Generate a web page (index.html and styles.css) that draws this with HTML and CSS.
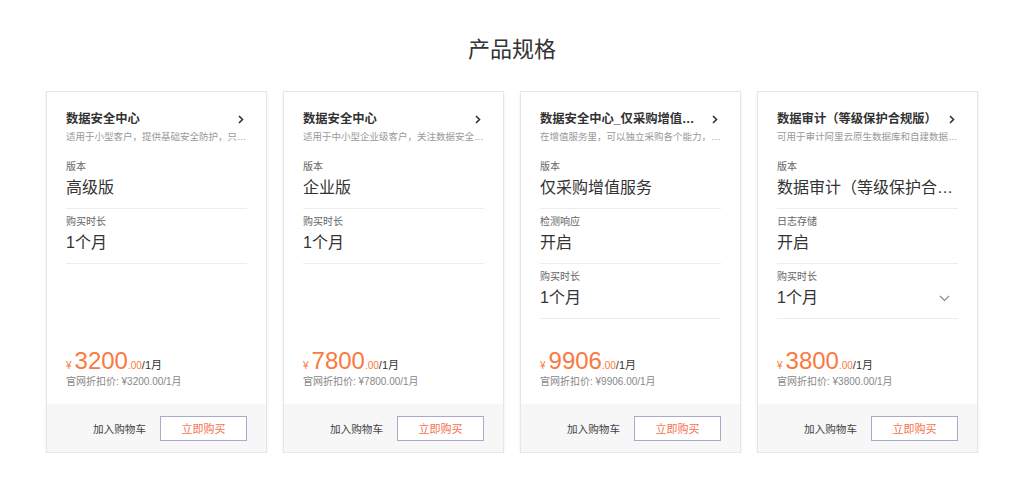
FILE: index.html
```html
<!DOCTYPE html>
<html lang="zh-CN">
<head>
<meta charset="utf-8">
<title>产品规格</title>
<link rel="stylesheet" href="styles.css">
</head>
<body>
<h1 class="page-title">产品规格</h1>
<div class="cards">

  <div class="card">
    <div class="card-body">
      <div class="card-head">
        <span class="card-title">数据安全中心</span>
        <svg class="chev-right" width="6" height="9" viewBox="0 0 6 9"><path d="M1 1l3.5 3.5L1 8" fill="none" stroke="#333" stroke-width="1.6"/></svg>
      </div>
      <div class="card-desc">适用于小型客户，提供基础安全防护，只能查看安全风险</div>
      <div class="spec first">
        <div class="spec-label">版本</div>
        <div class="spec-value">高级版</div>
      </div>
      <div class="spec">
        <div class="spec-label">购买时长</div>
        <div class="spec-value">1个月</div>
      </div>
      <div class="price-block">
        <div class="price"><span class="cur">¥</span><span class="num">3200</span><span class="dec">.00</span><span class="unit">/1月</span></div>
        <div class="discount">官网折扣价: ¥3200.00/1月</div>
      </div>
    </div>
    <div class="card-foot">
      <span class="cart">加入购物车</span>
      <button class="buy">立即购买</button>
    </div>
  </div>

  <div class="card">
    <div class="card-body">
      <div class="card-head">
        <span class="card-title">数据安全中心</span>
        <svg class="chev-right" width="6" height="9" viewBox="0 0 6 9"><path d="M1 1l3.5 3.5L1 8" fill="none" stroke="#333" stroke-width="1.6"/></svg>
      </div>
      <div class="card-desc">适用于中小型企业级客户，关注数据安全与合规的用户</div>
      <div class="spec first">
        <div class="spec-label">版本</div>
        <div class="spec-value">企业版</div>
      </div>
      <div class="spec">
        <div class="spec-label">购买时长</div>
        <div class="spec-value">1个月</div>
      </div>
      <div class="price-block">
        <div class="price"><span class="cur">¥</span><span class="num">7800</span><span class="dec">.00</span><span class="unit">/1月</span></div>
        <div class="discount">官网折扣价: ¥7800.00/1月</div>
      </div>
    </div>
    <div class="card-foot">
      <span class="cart">加入购物车</span>
      <button class="buy">立即购买</button>
    </div>
  </div>

  <div class="card">
    <div class="card-body">
      <div class="card-head">
        <span class="card-title">数据安全中心_仅采购增值服务</span>
        <svg class="chev-right" width="6" height="9" viewBox="0 0 6 9"><path d="M1 1l3.5 3.5L1 8" fill="none" stroke="#333" stroke-width="1.6"/></svg>
      </div>
      <div class="card-desc">在增值服务里，可以独立采购各个能力，按需选择</div>
      <div class="spec first">
        <div class="spec-label">版本</div>
        <div class="spec-value">仅采购增值服务</div>
      </div>
      <div class="spec">
        <div class="spec-label">检测响应</div>
        <div class="spec-value">开启</div>
      </div>
      <div class="spec">
        <div class="spec-label">购买时长</div>
        <div class="spec-value">1个月</div>
      </div>
      <div class="price-block">
        <div class="price"><span class="cur">¥</span><span class="num">9906</span><span class="dec">.00</span><span class="unit">/1月</span></div>
        <div class="discount">官网折扣价: ¥9906.00/1月</div>
      </div>
    </div>
    <div class="card-foot">
      <span class="cart">加入购物车</span>
      <button class="buy">立即购买</button>
    </div>
  </div>

  <div class="card">
    <div class="card-body">
      <div class="card-head">
        <span class="card-title">数据审计（等级保护合规版）</span>
        <svg class="chev-right" width="6" height="9" viewBox="0 0 6 9"><path d="M1 1l3.5 3.5L1 8" fill="none" stroke="#333" stroke-width="1.6"/></svg>
      </div>
      <div class="card-desc">可用于审计阿里云原生数据库和自建数据库的操作</div>
      <div class="spec first">
        <div class="spec-label">版本</div>
        <div class="spec-value">数据审计（等级保护合规版）</div>
      </div>
      <div class="spec">
        <div class="spec-label">日志存储</div>
        <div class="spec-value">开启</div>
      </div>
      <div class="spec">
        <div class="spec-label">购买时长</div>
        <div class="spec-value select"><span>1个月</span>
          <svg class="chev-down" width="11" height="7" viewBox="0 0 11 7"><path d="M1 1l4.5 4.5L10 1" fill="none" stroke="#888" stroke-width="1.1"/></svg>
        </div>
      </div>
      <div class="price-block">
        <div class="price"><span class="cur">¥</span><span class="num">3800</span><span class="dec">.00</span><span class="unit">/1月</span></div>
        <div class="discount">官网折扣价: ¥3800.00/1月</div>
      </div>
    </div>
    <div class="card-foot">
      <span class="cart">加入购物车</span>
      <button class="buy">立即购买</button>
    </div>
  </div>

</div>
</body>
</html>
```

FILE: styles.css
```css
html, body {
  margin: 0;
  padding: 0;
  background: #fff;
}
body {
  font-family: "Liberation Sans", "Noto Sans CJK SC", sans-serif;
  color: #333;
}
.page-title {
  margin: 35px 0 0;
  height: 30px;
  line-height: 30px;
  text-align: center;
  font-size: 22px;
  font-weight: 400;
  color: #333;
}
.cards {
  display: flex;
  justify-content: center;
  gap: 16px;
  margin-top: 26px;
}
.card {
  width: 221px;
  height: 362px;
  box-sizing: border-box;
  border: 1px solid #e6e6e6;
  box-shadow: 0 2px 3px rgba(0, 0, 0, 0.07);
  display: flex;
  flex-direction: column;
  background: #fff;
}
.card-body {
  flex: 1;
  display: flex;
  flex-direction: column;
  padding: 19px 19px 15px 19px;
  min-height: 0;
}
.card-head {
  display: flex;
  align-items: center;
  gap: 6px;
  height: 16px;
  padding-right: 3px;
}
.card-title {
  flex: 1;
  min-width: 0;
  font-size: 12.3px;
  font-weight: 700;
  color: #333;
  white-space: nowrap;
  overflow: hidden;
  text-overflow: ellipsis;
  line-height: 16px;
}
.chev-right {
  flex: none;
}
.card-desc {
  margin-top: 3px;
  font-size: 9.5px;
  line-height: 14px;
  color: #999;
  white-space: nowrap;
  overflow: hidden;
  text-overflow: ellipsis;
}
.spec {
  padding: 6px 0 9px;
  border-bottom: 1px solid #ececec;
}
.spec.first {
  padding-top: 16px;
}
.spec-label {
  font-size: 10px;
  line-height: 14px;
  color: #666;
}
.spec-value {
  margin-top: 3px;
  font-size: 16px;
  line-height: 22px;
  color: #333;
  white-space: nowrap;
  overflow: hidden;
  text-overflow: ellipsis;
}
.spec-value.select {
  display: flex;
  align-items: center;
  justify-content: space-between;
  padding-right: 8px;
}
.price-block {
  margin-top: auto;
}
.price {
  display: flex;
  align-items: baseline;
  height: 28px;
  line-height: 28px;
}
.price .cur {
  font-size: 10px;
  color: #f97a3e;
  margin-right: 3px;
}
.price .num {
  font-size: 24px;
  color: #f97a3e;
}
.price .dec {
  font-size: 10px;
  color: #f97a3e;
}
.price .unit {
  font-size: 11px;
  color: #333;
}
.discount {
  font-size: 10px;
  line-height: 14px;
  color: #888;
}
.card-foot {
  height: 48px;
  flex: none;
  background: #f7f7f8;
  display: flex;
  align-items: center;
  justify-content: flex-end;
  gap: 14px;
  padding-right: 19px;
}
.cart {
  font-size: 10.6px;
  color: #444;
}
.buy {
  width: 87px;
  height: 25px;
  box-sizing: border-box;
  border: 1px solid #a8aac6;
  background: #fff;
  color: #f5734d;
  font-family: inherit;
  font-size: 11px;
  padding: 0;
  cursor: pointer;
}
```
